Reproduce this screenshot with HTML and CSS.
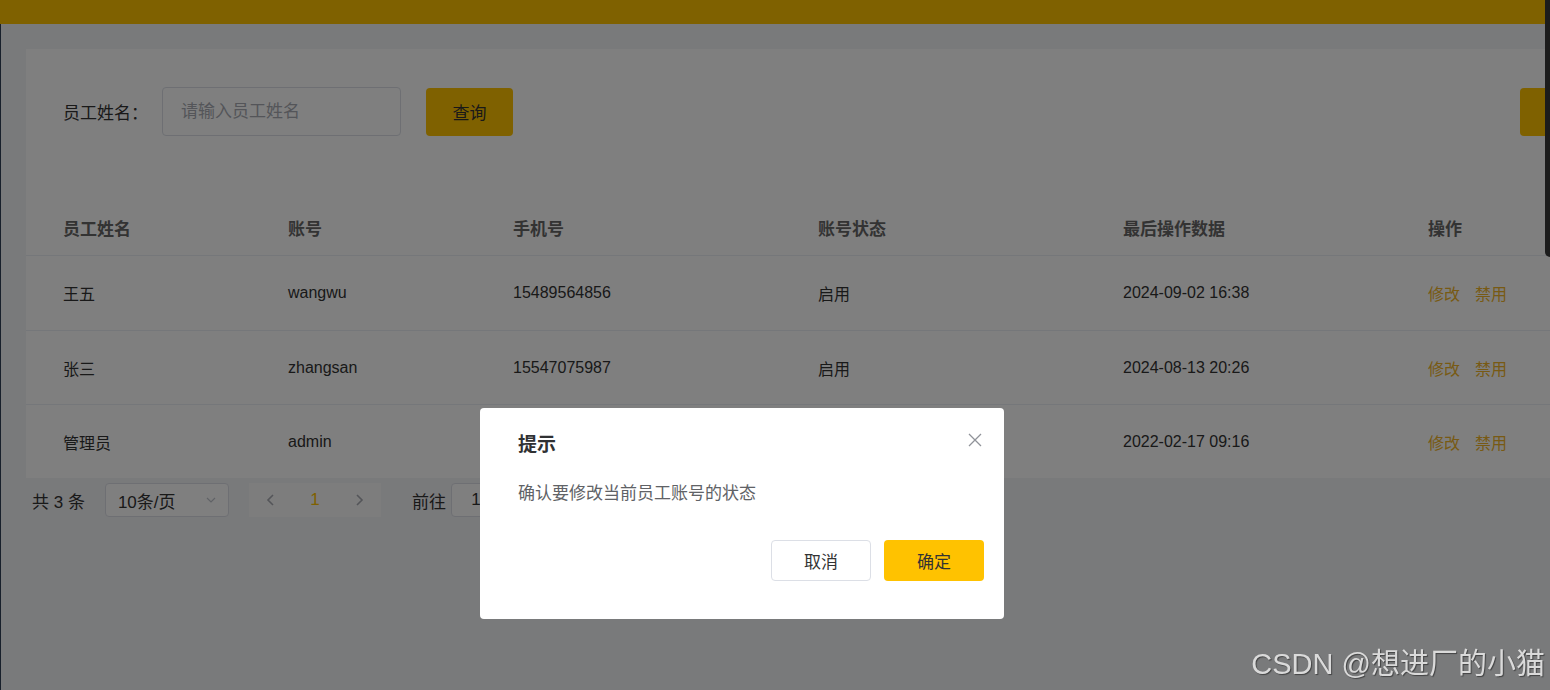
FILE: index.html
```html
<!DOCTYPE html>
<html>
<head>
    <title>员工管理</title>
    <meta charset="utf-8">
    <link rel="stylesheet" href="styles.css">
</head>
<body>
    <div class="topbar"></div>

    <div class="main">
        <!-- Search + table card -->
        <div class="card">
            <div class="search">
                <span class="search-label">员工姓名：</span>
                <input class="search-input" placeholder="请输入员工姓名">
                <button class="btn btn-primary btn-query">查询</button>
                <button class="btn btn-primary btn-add"></button>
            </div>

            <table class="table">
                <colgroup>
                    <col style="width: 262px">
                    <col style="width: 225px">
                    <col style="width: 305px">
                    <col style="width: 305px">
                    <col style="width: 305px">
                    <col>
                </colgroup>
                <thead>
                    <tr>
                        <th>员工姓名</th>
                        <th>账号</th>
                        <th>手机号</th>
                        <th>账号状态</th>
                        <th>最后操作数据</th>
                        <th>操作</th>
                    </tr>
                </thead>
                <tbody>
                    <tr>
                        <td>王五</td>
                        <td>wangwu</td>
                        <td>15489564856</td>
                        <td>启用</td>
                        <td>2024-09-02 16:38</td>
                        <td><a class="link">修改</a><a class="link">禁用</a></td>
                    </tr>
                    <tr>
                        <td>张三</td>
                        <td>zhangsan</td>
                        <td>15547075987</td>
                        <td>启用</td>
                        <td>2024-08-13 20:26</td>
                        <td><a class="link">修改</a><a class="link">禁用</a></td>
                    </tr>
                    <tr>
                        <td>管理员</td>
                        <td>admin</td>
                        <td>13812345678</td>
                        <td>启用</td>
                        <td>2022-02-17 09:16</td>
                        <td><a class="link">修改</a><a class="link">禁用</a></td>
                    </tr>
                </tbody>
            </table>
        </div>

        <!-- Pagination -->
        <div class="pagination">
            <span class="total">共 3 条</span>
            <div class="page-size">
                <span>10条/页</span>
                <svg width="14" height="14" viewBox="0 0 14 14"><path d="M3 5l4 4 4-4" fill="none" stroke="#c0c4cc" stroke-width="1.2"/></svg>
            </div>
            <div class="pager">
                <span class="pager-btn">
                    <svg width="14" height="14" viewBox="0 0 14 14"><path d="M9 2L4 7l5 5" fill="none" stroke="#a8abb2" stroke-width="1.6"/></svg>
                </span>
                <span class="pager-btn current">1</span>
                <span class="pager-btn">
                    <svg width="14" height="14" viewBox="0 0 14 14"><path d="M5 2l5 5-5 5" fill="none" stroke="#a8abb2" stroke-width="1.6"/></svg>
                </span>
            </div>
            <span class="jump">前往</span>
            <div class="jump-input">1</div>
            <span class="jump">页</span>
        </div>
    </div>

    <!-- Confirm dialog -->
    <div class="overlay">
        <div class="dialog">
            <div class="dialog-title">提示</div>
            <svg class="dialog-close" width="14" height="14" viewBox="0 0 14 14"><path d="M1 1l12 12M13 1L1 13" stroke="#909399" stroke-width="1.3"/></svg>
            <div class="dialog-message">确认要修改当前员工账号的状态</div>
            <div class="dialog-footer">
                <button class="btn btn-default">取消</button>
                <button class="btn btn-primary">确定</button>
            </div>
        </div>
    </div>

    <div class="watermark">CSDN @想进厂的小猫</div>
    <div class="edge"></div>
</body>
</html>
```

FILE: styles.css
```css
:root {
    --primary: #ffc200;
    --border: #dcdfe6;
    --line: #ebeef5;
}

body {
    margin: 0;
    width: 1550px;
    height: 690px;
    overflow: hidden;
    background: #f3f4f7;
    font-family: "Liberation Sans", "Noto Sans CJK SC", sans-serif;
    color: #333;
}

.topbar {
    height: 24px;
    background: var(--primary);
}

.main {
    border-left: 1px solid #304156;
    padding: 25px 0 0 25px;
    height: 641px;
}

.card {
    width: 1651px;
    background: white;
    padding-top: 38px;
}

.search {
    display: flex;
    align-items: center;
    padding: 0 37px;
    height: 49px;
}

.search-label {
    font-size: 17px;
    color: #333;
    margin-right: 14px;
}

.search-input {
    width: 239px;
    height: 49px;
    box-sizing: border-box;
    border: 1px solid var(--border);
    border-radius: 4px;
    padding: 0 18px;
    font-size: 17px;
    font-family: inherit;
    outline: none;
}

.search-input::placeholder {
    color: #a8abb2;
}

.btn {
    border: none;
    border-radius: 4px;
    font-size: 17px;
    font-family: inherit;
    color: #333;
    cursor: pointer;
}

.btn-primary {
    background: var(--primary);
}

.btn-query {
    margin-left: 25px;
    width: 87px;
    height: 48px;
}

.btn-add {
    margin-left: auto;
    width: 120px;
    height: 48px;
}

.table {
    width: 100%;
    margin-top: 67px;
    border-collapse: collapse;
    table-layout: fixed;
}

.table th {
    height: 48px;
    text-align: left;
    font-size: 17px;
    font-weight: bold;
    color: #666;
    border-bottom: 1px solid var(--line);
    padding: 0 0 4px 0;
}

.table td {
    height: 73px;
    font-size: 16px;
    color: #333;
    border-bottom: 1px solid var(--line);
    padding: 0;
}

.table tbody tr:first-child td {
    height: 74px;
}

.table tbody tr:last-child td {
    border-bottom: none;
}

.table th:first-child,
.table td:first-child {
    padding-left: 37px;
}

.link {
    color: #f0b429;
    margin-right: 15px;
}

.pagination {
    display: flex;
    align-items: center;
    margin: 5px 0 0 6px;
    height: 34px;
    font-size: 17px;
    color: #333;
}

.page-size {
    display: flex;
    align-items: center;
    justify-content: space-between;
    width: 124px;
    height: 34px;
    box-sizing: border-box;
    margin-left: 20px;
    padding: 0 10px 0 12px;
    border: 1px solid var(--border);
    border-radius: 4px;
    background: white;
}

.pager {
    display: flex;
    margin-left: 20px;
    background: #fafafa;
}

.pager-btn {
    width: 44px;
    height: 34px;
    display: flex;
    align-items: center;
    justify-content: center;
    font-size: 17px;
}

.pager-btn.current {
    color: var(--primary);
}

.jump {
    margin-left: 31px;
}

.jump-input {
    width: 50px;
    height: 34px;
    box-sizing: border-box;
    margin: 0 8px 0 5px;
    border: 1px solid var(--border);
    border-radius: 4px;
    background: white;
    text-align: center;
    line-height: 32px;
}

.jump-input + .jump {
    margin-left: 0;
}

.overlay {
    position: fixed;
    inset: 0;
    background: rgba(0, 0, 0, 0.5);
    display: flex;
    align-items: flex-start;
    padding: 408px 0 0 480px;
}

.dialog {
    position: relative;
    width: 524px;
    height: 211px;
    box-sizing: border-box;
    background: white;
    border-radius: 4px;
    padding: 25px 20px 38px 38px;
}

.dialog-title {
    font-size: 19px;
    font-weight: bold;
    color: #303133;
    line-height: 24px;
}

.dialog-close {
    position: absolute;
    top: 25px;
    right: 22px;
}

.dialog-message {
    margin-top: 25px;
    font-size: 17px;
    line-height: 24px;
    color: #606266;
}

.dialog-footer {
    display: flex;
    justify-content: flex-end;
    gap: 13px;
    margin-top: 34px;
}

.dialog-footer .btn {
    width: 100px;
    height: 41px;
}

.btn-default {
    background: white;
    border: 1px solid var(--border);
}

.watermark {
    position: fixed;
    right: 5px;
    bottom: 8px;
    font-size: 29px;
    line-height: 36px;
    color: #dadada;
    text-shadow: 1px 1px 1px rgba(0, 0, 0, 0.45);
}

.edge {
    position: fixed;
    top: 0;
    right: 0;
    width: 5px;
    height: 257px;
    background: #1c1c1c;
    border-bottom-left-radius: 5px;
}
```
